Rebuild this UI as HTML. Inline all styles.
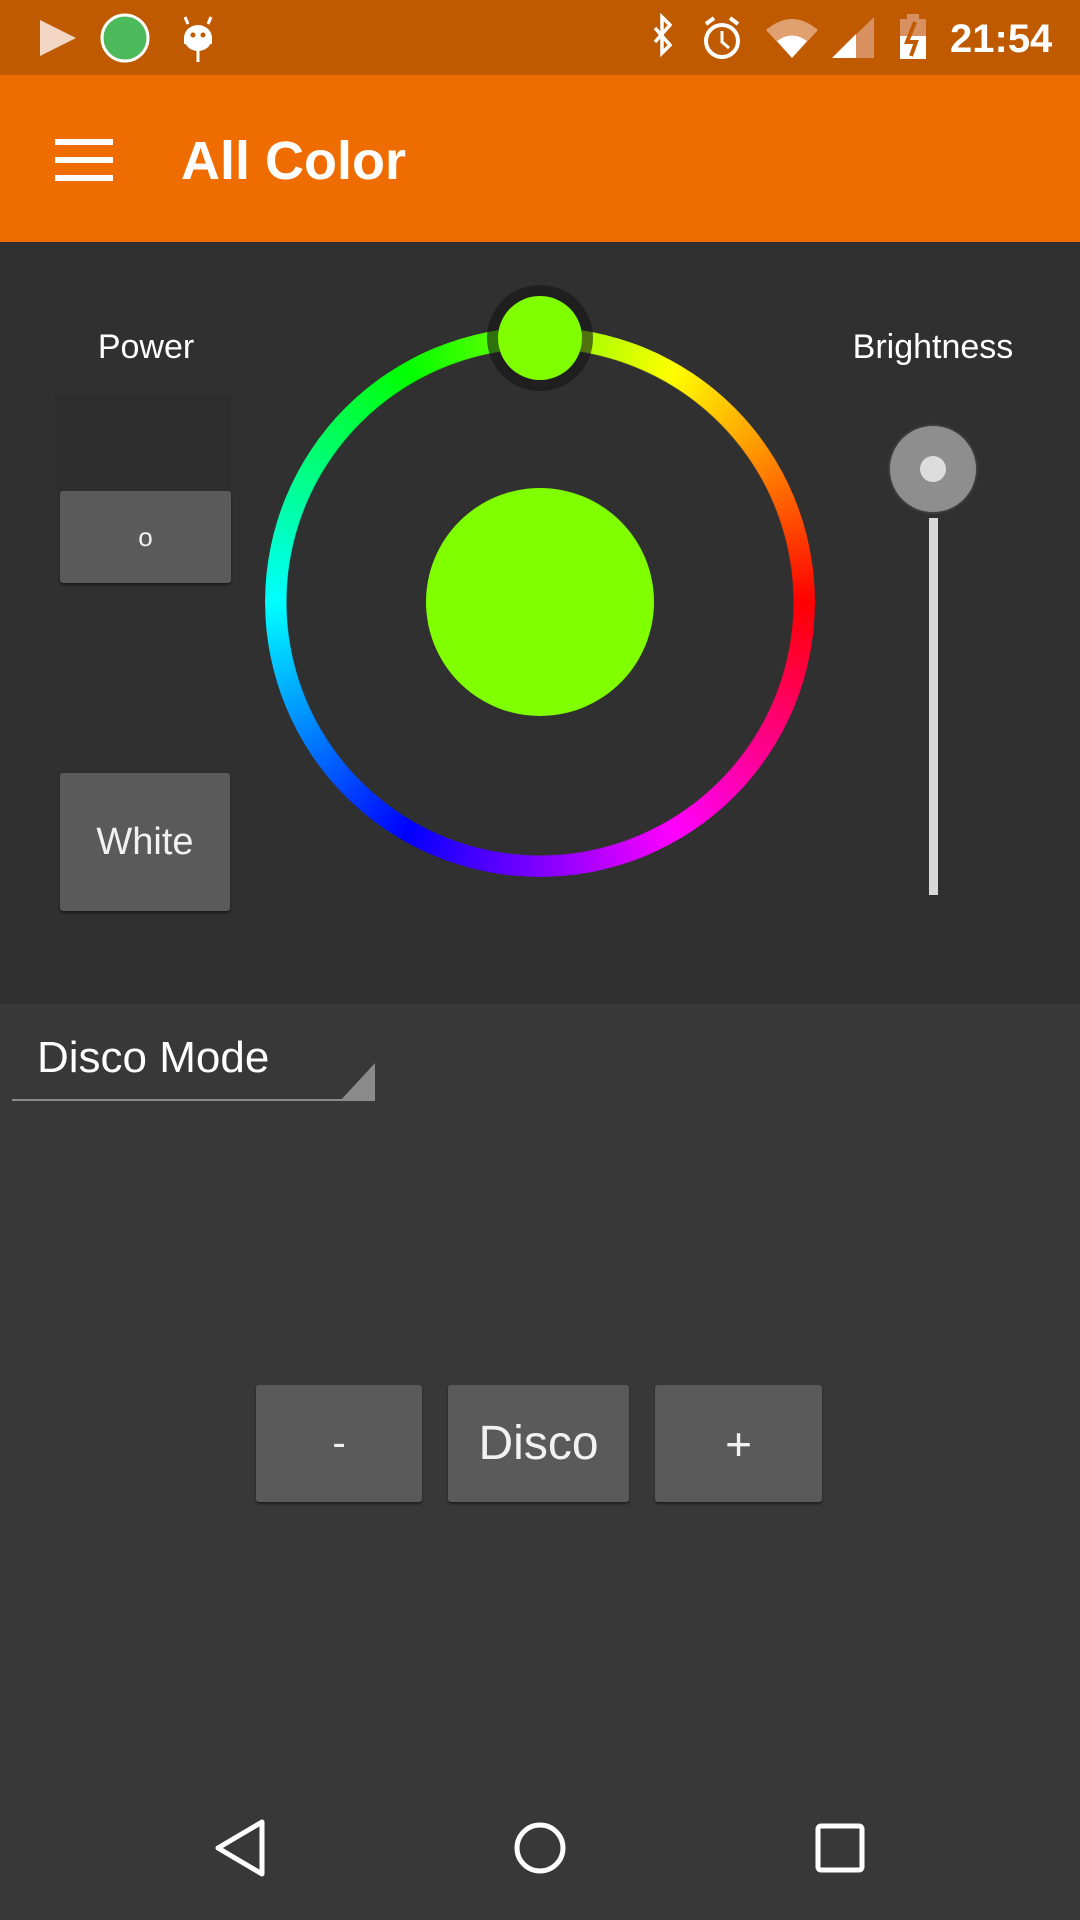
<!DOCTYPE html>
<html><head><meta charset="utf-8"><style>
*{margin:0;padding:0;box-sizing:border-box}
body{width:1080px;height:1920px;background:#383838;font-family:"Liberation Sans",sans-serif;color:#fff;position:relative;overflow:hidden}
.abs{position:absolute}
.btn{position:absolute;background:#5a5a5a;border-radius:3px;box-shadow:0 2px 2px rgba(0,0,0,.45);display:flex;align-items:center;justify-content:center;color:#f2f2f2}
</style></head><body>
<div class="abs" style="left:0;top:0;width:1080px;height:75px;background:#bf5a00"></div>
<svg class="abs" style="left:0;top:0" width="1080" height="75">
<polygon points="40,20 40,56 76,38" fill="#f3d6c4"/>
<circle cx="125" cy="38" r="23" fill="#4cba5a" stroke="#fff" stroke-width="3"/>
<ellipse cx="198" cy="38" rx="14" ry="13" fill="#fff"/><rect x="184" y="36" width="28" height="8" fill="#fff"/>
<line x1="198" y1="48" x2="198" y2="62" stroke="#fff" stroke-width="3"/>
<line x1="188" y1="24" x2="185" y2="17" stroke="#fff" stroke-width="3"/><line x1="208" y1="24" x2="211" y2="17" stroke="#fff" stroke-width="3"/>
<circle cx="193" cy="35" r="2.5" fill="#bf5a00"/><circle cx="203" cy="35" r="2.5" fill="#bf5a00"/>
<path d="M655,28 L670,45 L662,53 L662,17 L670,25 L655,42" fill="none" stroke="#fff" stroke-width="3.5"/>
<circle cx="722" cy="41" r="16" fill="none" stroke="#fff" stroke-width="4"/><path d="M722,31 V42 L729,48" fill="none" stroke="#fff" stroke-width="3"/>
<path d="M706,24 L714,18 M738,24 L730,18" stroke="#fff" stroke-width="4"/>
<path d="M766,30 Q792,8 818,30 L792,58 Z" fill="#e0a070"/><path d="M777,41 Q792,30 807,41 L792,58 Z" fill="#fff"/>
<polygon points="832,58 874,17 874,58" fill="#d99060"/><polygon points="832,58 856,34 856,58" fill="#fff"/>
<rect x="900" y="19" width="26" height="40" fill="#d99060"/><rect x="907" y="14" width="12" height="6" fill="#d99060"/>
<path d="M900,36 H926 V59 H900 Z" fill="#fff"/><path d="M915,22 L907,42 H916 L911,56" stroke="#bf5a00" stroke-width="4" fill="none"/>
<text x="950" y="52" font-size="40" fill="#fff" font-family="Liberation Sans" font-weight="bold">21:54</text>
</svg>
<div class="abs" style="left:0;top:75px;width:1080px;height:167px;background:#ef6c00"></div>
<div class="abs" style="left:55px;top:139px;width:58px;height:6px;background:#fff"></div>
<div class="abs" style="left:55px;top:157px;width:58px;height:6px;background:#fff"></div>
<div class="abs" style="left:55px;top:175px;width:58px;height:6px;background:#fff"></div>
<div class="abs" style="left:181px;top:129px;font-size:54px;font-weight:bold;line-height:64px">All Color</div>
<div class="abs" style="left:0;top:242px;width:1080px;height:762px;background:#303030"></div>
<div class="abs" style="left:46px;top:328px;width:200px;font-size:34px;text-align:center">Power</div>
<div class="abs" style="left:833px;top:328px;width:200px;font-size:34px;text-align:center">Brightness</div>
<div class="abs" style="left:55px;top:395px;width:176px;height:95px;background:#2d2d2d"></div>
<div class="btn" style="left:60px;top:491px;width:171px;height:92px;font-size:26px">o</div>
<div class="btn" style="left:60px;top:773px;width:170px;height:138px;font-size:38px">White</div>
<div class="abs" style="left:265px;top:327px;width:550px;height:550px;border-radius:50%;background:conic-gradient(#80ff00,#ffff00 30deg,#ff8000 60deg,#ff0000 90deg,#ff0080 120deg,#ff00ff 150deg,#8000ff 180deg,#0000ff 210deg,#0080ff 240deg,#00ffff 270deg,#00ff80 300deg,#00ff00 330deg,#80ff00 360deg);-webkit-mask:radial-gradient(circle,transparent 253px,#000 254px);mask:radial-gradient(circle,transparent 253px,#000 254px)"></div>
<div class="abs" style="left:426px;top:488px;width:228px;height:228px;border-radius:50%;background:#80ff00"></div>
<div class="abs" style="left:487px;top:285px;width:106px;height:106px;border-radius:50%;background:rgba(20,20,20,.6)"></div>
<div class="abs" style="left:498px;top:296px;width:84px;height:84px;border-radius:50%;background:#80ff00"></div>
<div class="abs" style="left:929px;top:518px;width:9px;height:377px;background:#d8d8d8"></div>
<div class="abs" style="left:890px;top:426px;width:86px;height:86px;border-radius:50%;background:#8e8e8e;box-shadow:0 0 3px #666"></div>
<div class="abs" style="left:920px;top:456px;width:26px;height:26px;border-radius:50%;background:#ddd"></div>
<div class="abs" style="left:37px;top:1033px;font-size:44px">Disco Mode</div>
<div class="abs" style="left:12px;top:1099px;width:363px;height:2px;background:#8a8a8a"></div>
<svg class="abs" style="left:340px;top:1063px" width="36" height="38"><polygon points="35,0 35,38 0,38" fill="#8a8a8a"/></svg>
<div class="btn" style="left:256px;top:1385px;width:166px;height:117px;font-size:40px">-</div>
<div class="btn" style="left:448px;top:1385px;width:181px;height:117px;font-size:48px">Disco</div>
<div class="btn" style="left:655px;top:1385px;width:167px;height:117px;font-size:46px">+</div>
<svg class="abs" style="left:0;top:1800px" width="1080" height="100">
<polygon points="262,22 262,74 218,48" fill="none" stroke="#fff" stroke-width="5" stroke-linejoin="round"/>
<circle cx="540" cy="48" r="23" fill="none" stroke="#fff" stroke-width="5"/>
<rect x="818" y="26" width="44" height="44" rx="3" fill="none" stroke="#fff" stroke-width="5"/>
</svg>
</body></html>
